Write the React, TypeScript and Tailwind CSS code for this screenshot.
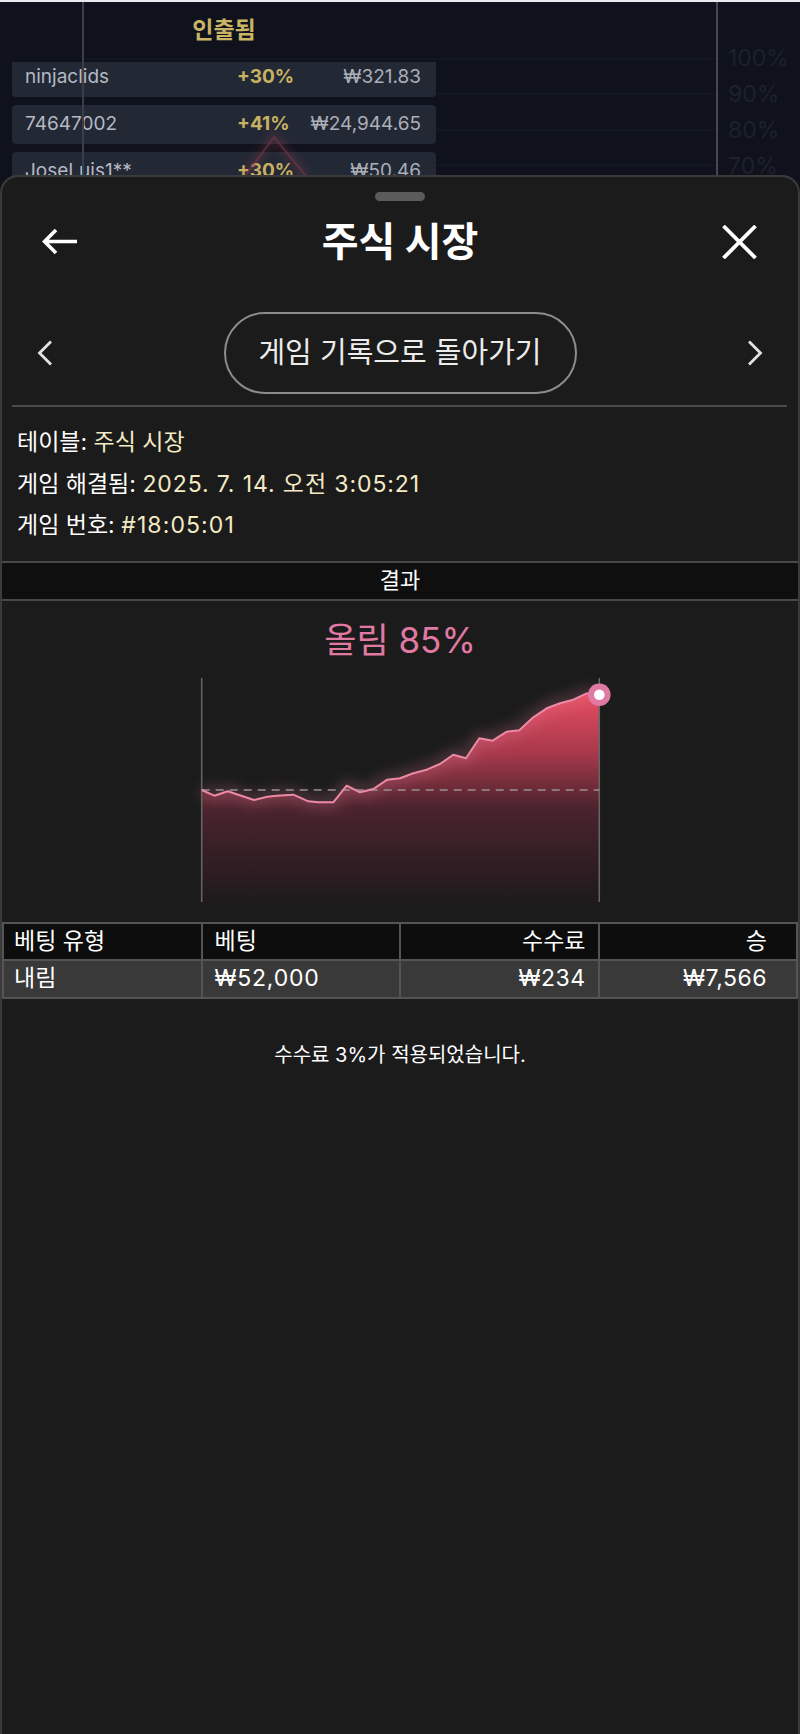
import React from "react";

const chartPts: [number, number][] = [
  [1.7, 112], [14.3, 117.7], [27.7, 113.3], [54, 122], [67.3, 118.7], [76.7, 117.7],
  [93.3, 116.7], [108.3, 123.3], [118.3, 124.3], [133.3, 124.3], [146.7, 107.7],
  [160, 114.3], [173.3, 111], [187.3, 101.7], [200, 100.3], [213.3, 95.3],
  [226.7, 91.7], [240, 86], [253.3, 76.7], [266, 80.3], [279.3, 60.3], [292.7, 62.7],
  [306.7, 53.7], [319.3, 52.3], [333.3, 39.3], [346.7, 30.3], [360, 25.3],
  [373.3, 21.7], [386.7, 15.3], [399.3, 16.7],
];

function ResultChart() {
  const line = chartPts.map((p, i) => `${i === 0 ? "M" : "L"}${p[0]} ${p[1]}`).join(" ");
  const area = `${line} L399.3 225 L1.7 225 Z`;
  return (
    <svg width="400" height="225" viewBox="0 0 400 225" className="mx-auto block overflow-visible">
      <defs>
        <linearGradient id="fillg" x1="0" y1="15" x2="0" y2="225" gradientUnits="userSpaceOnUse">
          <stop offset="0" stopColor="#e84d62" />
          <stop offset="0.3" stopColor="#a3384a" />
          <stop offset="0.55" stopColor="#4a232d" />
          <stop offset="1" stopColor="#1e1a1c" />
        </linearGradient>
        <filter id="glow" x="-20%" y="-50%" width="140%" height="200%">
          <feGaussianBlur stdDeviation="7" />
        </filter>
      </defs>
      <path d={area} fill="url(#fillg)" />
      <path d={line} fill="none" stroke="#e8849f" strokeWidth="10" opacity="0.3" filter="url(#glow)" />
      <line x1="1.7" y1="0" x2="1.7" y2="224" stroke="#676767" strokeWidth="1.5" />
      <line x1="399.3" y1="0" x2="399.3" y2="224" stroke="#676767" strokeWidth="1.5" />
      <line x1="1.7" y1="112" x2="399.3" y2="112" stroke="#9a9094" strokeWidth="1.5" strokeDasharray="8 6" />
      <path d={line} fill="none" stroke="#ec8aa6" strokeWidth="2" strokeLinejoin="round" />
      <circle cx="399.3" cy="16.7" r="11.3" fill="#e07aa3" />
      <circle cx="399.3" cy="16.7" r="5.3" fill="#ffffff" />
    </svg>
  );
}

const bgRows = [
  { name: "ninjaclids", pct: "+30%", amt: "₩321.83" },
  { name: "74647002", pct: "+41%", amt: "₩24,944.65" },
  { name: "JoseLuis1**", pct: "+30%", amt: "₩50.46" },
];

export default function App() {
  return (
    <div className="relative w-[800px] h-[1734px] overflow-hidden bg-[#0f121c] font-['Inter','Noto_Sans_CJK_KR',sans-serif]">
      <div className="h-[2px] bg-[#e9e9ef]" />
      {/* background game view */}
      <div className="relative h-[174px] flex overflow-hidden">
        <svg className="absolute inset-0" width="800" height="174">
          {[57, 92, 128, 163].map((y) => (
            <line key={y} x1="83" y1={y} x2="717" y2={y} stroke="#161a26" strokeWidth="1.5" />
          ))}
        </svg>
        <div className="relative ml-[12px] w-[424px] flex flex-col">
          <div className="shrink-0 h-[60px] pb-[4px] flex items-center justify-center text-[23px] font-bold text-[#c9b465]">
            인출됨
          </div>
          <div className="shrink-0 flex flex-col gap-[8px] text-[19px]">
            {bgRows.map((r, i) => (
              <div
                key={r.name}
                className={`shrink-0 flex items-center rounded-[4px] bg-[#232835] pl-[13px] pr-[15px] ${i === 0 ? "h-[35px] pb-[5px] rounded-t-none" : "h-[39px]"}`}
              >
                <span className="w-[212px] text-[#b5b9c3]">{r.name}</span>
                <span className="w-[70px] font-bold text-[#c6b262]">{r.pct}</span>
                <span className="flex-1 text-right text-[#abafb9]">{r.amt}</span>
              </div>
            ))}
          </div>
        </div>
        <div className="relative ml-auto w-[72px] pt-[38px] flex flex-col text-[23px] text-[#1d212c]">
          {["100%", "90%", "80%", "70%"].map((t) => (
            <div key={t} className="shrink-0 h-[36px] leading-[36px]">{t}</div>
          ))}
        </div>
        <svg className="absolute inset-0 pointer-events-none" width="800" height="174">
          <defs>
            <filter id="bgglow" x="-50%" y="-50%" width="200%" height="200%">
              <feGaussianBlur stdDeviation="4" />
            </filter>
          </defs>
          <path d="M245 174 L274 135 L306 174" fill="none" stroke="#b8485f" strokeWidth="8" opacity="0.22" filter="url(#bgglow)" />
          <path d="M245 174 L274 135 L306 174" fill="none" stroke="#7a3546" strokeWidth="2" opacity="0.6" />
          <line x1="83" y1="0" x2="83" y2="174" stroke="#3a3e4a" strokeWidth="2" />
          <line x1="717" y1="0" x2="717" y2="174" stroke="#454854" strokeWidth="2" />
        </svg>
      </div>

      {/* bottom sheet */}
      <div className="absolute left-0 right-0 top-[175px] bottom-0 rounded-t-[18px] border-2 border-b-0 border-[#3b3b3b] bg-[#1b1b1b] flex flex-col text-white">
        <div className="shrink-0 mt-[15px] mx-auto h-[9px] w-[50px] rounded-full bg-[#5b5b5b]" />
        <div className="shrink-0 h-[82px] grid grid-cols-[1fr_auto_1fr] items-center">
          <div className="pl-[40px]">
            <svg width="36" height="28" viewBox="0 0 36 28">
              <path d="M35 13.5 H3 M14 2 L2.5 13.5 L14 25" fill="none" stroke="#ffffff" strokeWidth="3.6" />
            </svg>
          </div>
          <div className="text-[40px] font-bold leading-none">주식 시장</div>
          <div className="flex justify-end pr-[41px]">
            <svg width="35" height="34" viewBox="0 0 35 34">
              <path d="M1.5 1 L33.5 33 M33.5 1 L1.5 33" fill="none" stroke="#ffffff" strokeWidth="3.8" />
            </svg>
          </div>
        </div>
        <div className="shrink-0 mt-[29px] h-[82px] flex items-center justify-between px-[35px]">
          <svg width="16" height="26" viewBox="0 0 16 26">
            <path d="M14 1.5 L2.5 13 L14 24.5" fill="none" stroke="#e2e2e2" strokeWidth="2.8" />
          </svg>
          <div className="h-[82px] w-[353px] rounded-full border-2 border-[#8c8c8c] flex items-center justify-center text-[29px] text-[#ececec]">
            게임 기록으로 돌아가기
          </div>
          <svg width="16" height="26" viewBox="0 0 16 26">
            <path d="M2 1.5 L13.5 13 L2 24.5" fill="none" stroke="#e2e2e2" strokeWidth="2.8" />
          </svg>
        </div>
        <div className="shrink-0 mt-[11px] ml-[10px] mr-[11px] h-[2px] bg-[#4a4a4a]" />
        <div className="shrink-0 pt-[15px] pl-[15px] text-[23px] leading-[41.5px] text-white">
          <div>테이블: <span className="text-[#f3eac4]">주식 시장</span></div>
          <div>게임 해결됨: <span className="text-[#f3eac4] tracking-[0.9px]">2025. 7. 14. 오전 3:05:21</span></div>
          <div>게임 번호: <span className="text-[#f3eac4] tracking-[1.1px]">#18:05:01</span></div>
        </div>
        <div className="shrink-0 mt-[14px] h-[40px] border-y-2 border-[#484848] bg-[#0f0f0f] flex items-center justify-center text-[22px]">
          결과
        </div>
        <div className="shrink-0 mt-[19px] h-[40px] leading-[40px] text-center text-[35px] text-[#e07aa3]">
          올림 85%
        </div>
        <div className="shrink-0 mt-[18px]">
          <ResultChart />
        </div>
        <div className="shrink-0 mt-[19px] grid grid-cols-4 gap-[2px] bg-[#545454] p-[2px] text-[23px]">
          <div className="h-[35px] bg-[#0d0d0d] flex items-center pl-[10px]">베팅 유형</div>
          <div className="h-[35px] bg-[#0d0d0d] flex items-center pl-[12px]">베팅</div>
          <div className="h-[35px] bg-[#0d0d0d] flex items-center justify-end pr-[12px]">수수료</div>
          <div className="h-[35px] bg-[#0d0d0d] flex items-center justify-end pr-[29px]">승</div>
          <div className="h-[36px] bg-[#393939] flex items-center pl-[10px]">내림</div>
          <div className="h-[36px] bg-[#393939] flex items-center pl-[12px] tracking-[0.8px]">₩52,000</div>
          <div className="h-[36px] bg-[#393939] flex items-center justify-end pr-[12px] tracking-[0.5px]">₩234</div>
          <div className="h-[36px] bg-[#393939] flex items-center justify-end pr-[29px] tracking-[0.5px]">₩7,566</div>
        </div>
        <div className="shrink-0 mt-[41px] leading-[30px] text-center text-[20px]">수수료 3%가 적용되었습니다.</div>
      </div>
    </div>
  );
}
